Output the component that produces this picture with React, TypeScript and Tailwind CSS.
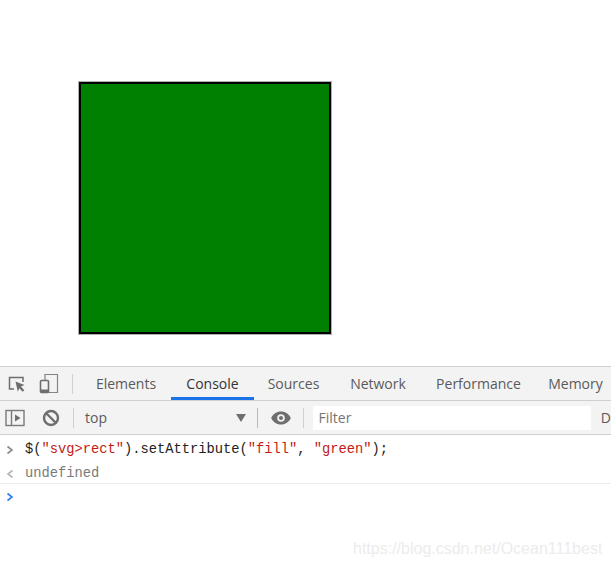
const uiFont = { fontFamily: '"Open Sans", "Noto Sans", sans-serif' };

function InspectIcon() {
  return (
    <svg width="20" height="20" viewBox="0 0 20 20" fill="none">
      <path d="M7 15H2.5V3.5H16V8" stroke="#6e6e6e" strokeWidth="1.5" />
      <path d="M8.5 7.5l9 3.6-3.6 1.5 3.4 3.6-1.6 1.6-3.4-3.6-1.5 3.6z" fill="#6e6e6e" />
    </svg>
  );
}

function DeviceIcon() {
  return (
    <svg width="20" height="21" viewBox="0 0 20 21" fill="none">
      <path d="M6 7V1.5H18.5V19.5H9" stroke="#858585" strokeWidth="1.2" />
      <rect x="1.5" y="7.5" width="8" height="12" rx="1" stroke="#6e6e6e" strokeWidth="1.6" />
      <rect x="1.5" y="16.5" width="8" height="3" fill="#6e6e6e" />
    </svg>
  );
}

function SidebarIcon() {
  return (
    <svg width="20" height="18" viewBox="0 0 20 18" fill="none">
      <rect x="1" y="1.5" width="18" height="15" stroke="#7a7a7a" strokeWidth="1.4" />
      <path d="M6.5 1.5v15" stroke="#7a7a7a" strokeWidth="1.4" />
      <path d="M10 5.5l5.5 3.5-5.5 3.5z" fill="#6e6e6e" />
    </svg>
  );
}

function ClearIcon() {
  return (
    <svg width="18" height="18" viewBox="0 0 18 18" fill="none">
      <circle cx="9" cy="9" r="7" stroke="#6e6e6e" strokeWidth="2.4" />
      <path d="M4 4l10 10" stroke="#6e6e6e" strokeWidth="2.4" />
    </svg>
  );
}

function EyeIcon() {
  return (
    <svg width="20" height="14" viewBox="0 0 20 14">
      <path
        fillRule="evenodd"
        d="M10 .5C5.5.5 2 3 .2 7 2 11 5.5 13.5 10 13.5S18 11 19.800 7C18 3 14.500.5 10 .5zM10 3.200a3.800 3.800 0 1 1 0 7.600 3.800 3.800 0 0 1 0-7.600zM10 5a2 2 0 1 0 0 4 2 2 0 0 0 0-4z"
        fill="#6e6e6e"
      />
    </svg>
  );
}

function Chevron({ color, left }: { color: string; left?: boolean }) {
  return (
    <svg width="8" height="10" viewBox="0 0 8 10" fill="none">
      <path d={left ? "M6.500 1.500L2 5l4.500 3.500" : "M1.500 1.500L6 5 1.500 8.500"} stroke={color} strokeWidth="1.600" />
    </svg>
  );
}

const tabs = [
  { label: "Elements", width: "w-[90px]" },
  { label: "Console", width: "w-[83px]" },
  { label: "Sources", width: "w-[79px]" },
  { label: "Network", width: "w-[90px]" },
  { label: "Performance", width: "w-[111px]" },
  { label: "Memory", width: "w-[83px]" },
];

export default function App() {
  return (
    <div className="relative flex h-[567px] w-[611px] flex-col overflow-hidden bg-white" style={uiFont}>
      <div className="h-[366px] shrink-0 pl-[79px] pt-[82px]">
        <div className="h-[252px] w-[252px] border-2 border-black bg-[#008000] shadow-[0_0_0_1px_#b0b0b0]" />
      </div>

      <div className="flex h-[35px] shrink-0 items-stretch border-y border-[#cfcfcf] bg-[#f3f3f3]">
        <div className="flex w-[74px] shrink-0 items-center pl-[7px]">
          <InspectIcon />
          <span className="ml-[12px]">
            <DeviceIcon />
          </span>
          <span className="ml-[13px] h-[20px] w-px bg-[#cfcfcf]" />
        </div>
        <div className="ml-[7px] flex">
          {tabs.map((t) => (
            <div
              key={t.label}
              className={`flex shrink-0 items-center justify-center text-[14px] ${t.width} ${
                t.label === "Console"
                  ? "border-b-[3px] border-[#1a73e8] pt-[2px] text-[#333333]"
                  : "text-[#5a5a5a]"
              }`}
            >
              {t.label}
            </div>
          ))}
        </div>
      </div>

      <div className="flex h-[34px] shrink-0 items-center border-b border-[#cfcfcf] bg-[#f3f3f3]">
        <span className="ml-[5px] flex">
          <SidebarIcon />
        </span>
        <span className="ml-[17px] flex">
          <ClearIcon />
        </span>
        <span className="ml-[13px] h-[20px] w-px bg-[#cfcfcf]" />
        <span className="ml-[11px] w-[151px] text-[14px] text-[#5a5a5a]">top</span>
        <span className="h-0 w-0 border-x-[5px] border-t-[8px] border-x-transparent border-t-[#6e6e6e]" />
        <span className="ml-[11px] h-[20px] w-px bg-[#b8b8b8]" />
        <span className="ml-[13px] flex">
          <EyeIcon />
        </span>
        <span className="ml-[12px] h-[20px] w-px bg-[#cfcfcf]" />
        <div className="ml-[9px] flex h-[24px] w-[279px] items-center bg-white pl-[6px] text-[14px] text-[#757575]">
          Filter
        </div>
        <span className="ml-[10px] text-[14px] text-[#5a5a5a]">D</span>
      </div>

      <div
        className="text-[13.75px] leading-[24px]"
        style={{ fontFamily: '"Liberation Mono", "DejaVu Sans Mono", monospace' }}
      >
        <div className="flex h-[27px] items-center pl-[6px] pt-[3px]">
          <Chevron color="#8a8a8a" />
          <span className="ml-[11px] whitespace-pre text-[#222222]">
            $(<span className="text-[#c41a16]">"svg&gt;rect"</span>).setAttribute(
            <span className="text-[#c41a16]">"fill"</span>, <span className="text-[#c41a16]">"green"</span>);
          </span>
        </div>
        <div className="flex h-[22px] items-center border-b border-[#ececec] pl-[6px] pt-[2px]">
          <Chevron color="#b5b5b5" left />
          <span className="ml-[11px] text-[#7a7a7a]">undefined</span>
        </div>
        <div className="flex h-[26px] items-center pl-[6px]">
          <Chevron color="#2f7bf0" />
        </div>
      </div>

      <div
        className="absolute left-[353px] top-[539px] text-[16px] leading-[20px] text-[#ececec]"
        style={{ fontFamily: '"Liberation Sans", Arial, sans-serif' }}
      >
        https://blog.csdn.net/Ocean111best
      </div>
    </div>
  );
}
